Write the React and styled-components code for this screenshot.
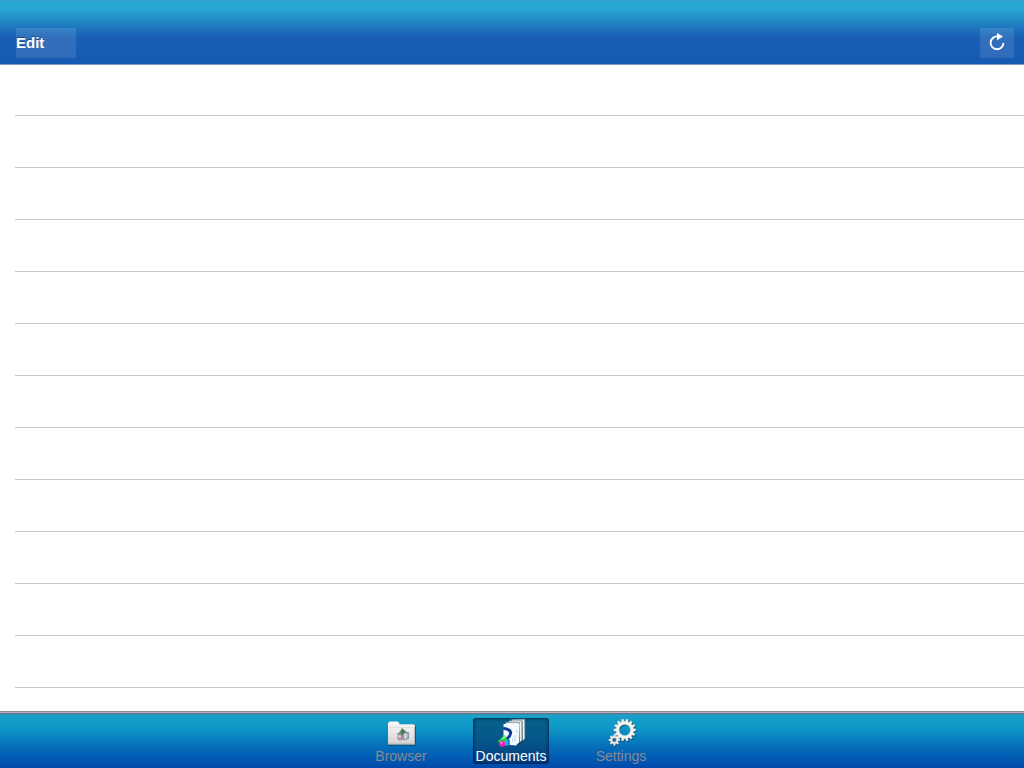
import React from "react";
import styled, { createGlobalStyle } from "styled-components";

const GlobalStyle = createGlobalStyle`
  * { box-sizing: border-box; }
  body {
    margin: 0;
    background: #fff;
    font-family: "Liberation Sans", Arial, sans-serif;
  }
`;

const Screen = styled.div`
  display: flex;
  flex-direction: column;
  height: 100vh;
`;

const NavBar = styled.header`
  flex: none;
  display: flex;
  justify-content: space-between;
  align-items: flex-end;
  height: 65px;
  padding: 0 10px 6px 16px;
  border-top: 1px solid #3c9cc6;
  border-bottom: 1px solid #7d9cc0;
  background: linear-gradient(#27aad2 0, #27a5cf 8px, #195fb6 36px, #155ab2 63px);
`;

const BarButton = styled.button`
  display: flex;
  align-items: center;
  justify-content: ${(p) => (p.$icon ? "center" : "flex-start")};
  width: ${(p) => (p.$icon ? 34 : 60)}px;
  height: 30px;
  padding: 0 0 2px;
  border: 0;
  background: rgba(255, 255, 255, 0.11);
  color: #fff;
  font: bold 15px "Liberation Sans", Arial, sans-serif;
  text-shadow: 0 -1px 0 rgba(0, 0, 0, 0.4);
`;

const FileList = styled.ul`
  flex: 1;
  min-height: 0;
  overflow: hidden;
  margin: 0;
  padding: 0 0 0 15px;
  list-style: none;
`;

const Row = styled.li`
  height: 52px;
  border-bottom: 1px solid #c8c7cc;
  &:first-child { height: 51px; }
`;

const TabBar = styled.nav`
  flex: none;
  display: flex;
  justify-content: center;
  gap: 34px;
  height: 57px;
  padding: 7px 2px 4px 0;
  background: linear-gradient(
    #8c8d93 0, #8c8d93 1px, #b4b2c2 1px, #b4b2c2 2px, #6f7488 2px, #6f7488 3px,
    #2483a8 3px, #2aa0c6 4px, #149fc9 6px, #109bc8 15px, #0468b8 39px, #0149ab 57px
  );
`;

const Tab = styled.button`
  display: flex;
  flex-direction: column;
  align-items: center;
  width: 76px;
  height: 46px;
  padding: 0;
  border: 0;
  border-radius: 3px;
  background: ${(p) => (p.$active ? "linear-gradient(#07628a, #06568a 50%, #033c82)" : "transparent")};
  box-shadow: ${(p) => (p.$active ? "inset 0 0 3px 1px rgba(0, 25, 60, 0.7)" : "none")};
  color: ${(p) => (p.$active ? "#fff" : "#858b92")};
  font: 14px/16px "Liberation Sans", Arial, sans-serif;

  svg { flex: none; margin-bottom: 1px; }
`;

function gearPath(cx, cy, outer, inner, teeth) {
  const step = (Math.PI * 2) / teeth;
  const points = [];
  for (let i = 0; i < teeth; i += 1) {
    const a = i * step;
    [[-0.32, inner], [-0.2, outer], [0.2, outer], [0.32, inner]].forEach(([offset, r]) => {
      const t = a + offset * step;
      points.push(`${(cx + r * Math.cos(t)).toFixed(2)} ${(cy + r * Math.sin(t)).toFixed(2)}`);
    });
  }
  return `M${points.join("L")}Z`;
}

function ring(cx, cy, r) {
  return `M${cx - r} ${cy}a${r} ${r} 0 1 0 ${2 * r} 0a${r} ${r} 0 1 0 ${-2 * r} 0Z`;
}

const RefreshIcon = () => (
  <svg width="18" height="20" viewBox="0 0 18 20" aria-hidden="true">
    <path d="M9.6 4.5A6.4 6.4 0 1 0 15.4 10.9" fill="none" stroke="#fff" strokeWidth="1.8" />
    <path d="M9 1L15 4.6L9 8.2Z" fill="#fff" />
  </svg>
);

const FolderIcon = () => (
  <svg width="32" height="29" viewBox="-1 0 32 29" aria-hidden="true">
    <defs>
      <linearGradient id="folder" x2="0" y2="1">
        <stop offset="0" stopColor="#fafafa" />
        <stop offset="1" stopColor="#d2d2d2" />
      </linearGradient>
    </defs>
    <path d="M2.5 7Q2.5 4 5 4H11.5L14 6.5H28Q29.8 6.5 29.8 9V27.8H2.5Z" fill="#04365d" opacity=".65" />
    <path d="M2 6.2Q2 3.5 4.5 3.5H11.3Q12.6 3.5 13.1 5L13.6 6.2H27.2Q29 6.2 29 8V26.5H2Z" fill="url(#folder)" />
    <path d="M3 9.3H28" stroke="#d5dadd" strokeWidth=".7" />
    <path d="M2.5 26H28.5V9" fill="none" stroke="#aaa" strokeWidth=".8" />
    <path d="M16 10L21 14.2L17 16.6L10.3 16.8L13.5 14Z" fill="#5f9465" />
    <path d="M16 11.5L21 15L18 20L15 16.5Z" fill="#4b6c58" />
    <path d="M17 15.3L22.4 14.4V20.6L17.6 21.8Z" fill="#b1bcc6" stroke="#76828e" strokeWidth=".9" />
    <path d="M19.2 15.6V20.6" stroke="#eef0f2" strokeWidth="1.2" />
    <circle cx="14.3" cy="19.4" r="3" fill="#ad8f9f" />
    <circle cx="13.6" cy="18.5" r="1.3" fill="#e0ced8" />
  </svg>
);

const DocumentsIcon = () => (
  <svg width="32" height="29" viewBox="0 0 32 29" aria-hidden="true">
    {[[9, 0.3], [6, 1.8], [3, 3.4]].map(([x, y]) => (
      <g key={x} transform={`translate(${x} ${y})`}>
        <path d="M9 2L21.5 1.6L22 21L19.8 23.6L7.5 22.6Z" fill="#073653" opacity=".65" />
        <path d="M7.8 1.2L20.8 .9L20.9 20.2L18.8 22.8L7 22Z" fill="#eff3f3" stroke="#718791" strokeWidth=".7" />
        <path d="M14.5 3.6L16 2.5L17.5 3.8L19.2 2.6" fill="none" stroke="#93a0a8" strokeWidth="1" />
      </g>
    ))}
    <path d="M8.5 6L24.4 5.6L24 24.3L21 27.4L8.5 26.3Z" fill="#f4fafb" />
    <path d="M17.5 20V24M20 17V24M22 12V15" stroke="#c3dceb" strokeWidth="1" />
    <path d="M8.2 10.2Q16.2 11.4 15.6 15.4Q15 19.2 10.5 21.6" fill="none" stroke="#0a3b9e" strokeWidth="3" />
    <path d="M9.6 17L12.6 22L8.6 24L2 24.2L5.8 20.5Z" fill="#14d936" />
    <path d="M9.6 17L10.6 20L6 22Z" fill="#7dfb85" />
    <path d="M9.6 22.2L14.6 21.4V27L9.6 27.8Z" fill="#26b9e6" />
    <path d="M12.6 21.8L14.6 21.4V27L12.6 27.3Z" fill="#1488b8" />
    <circle cx="7.2" cy="25.7" r="3" fill="#ec25b6" />
    <circle cx="6.5" cy="24.8" r="1.1" fill="#ffa6e4" />
  </svg>
);

const SettingsIcon = () => (
  <svg width="32" height="29" viewBox="-1 0 32 29" aria-hidden="true">
    <g fillRule="evenodd">
      <g fill="#073856" opacity=".7" transform="translate(.9 1)">
        <path d={gearPath(18.8, 12, 11, 8.8, 14) + ring(18.8, 12, 5.6)} />
        <path d={gearPath(8.4, 22, 5.6, 4, 8) + ring(8.4, 22, 2)} />
      </g>
      <path d={gearPath(18.8, 12, 11, 8.8, 14) + ring(18.8, 12, 5.6)} fill="#f3f3f0" stroke="#c2c2be" strokeWidth=".4" />
      <path d={gearPath(8.4, 22, 5.6, 4, 8) + ring(8.4, 22, 2)} fill="#eeeeea" stroke="#b5b5b0" strokeWidth=".4" />
    </g>
  </svg>
);

const TABS = [
  { label: "Browser", Icon: FolderIcon },
  { label: "Documents", Icon: DocumentsIcon, active: true },
  { label: "Settings", Icon: SettingsIcon },
];

export default function App() {
  return (
    <Screen>
      <GlobalStyle />
      <NavBar>
        <BarButton type="button">Edit</BarButton>
        <BarButton type="button" $icon aria-label="Refresh">
          <RefreshIcon />
        </BarButton>
      </NavBar>
      <FileList>
        {Array.from({ length: 12 }, (_, i) => (
          <Row key={i} />
        ))}
      </FileList>
      <TabBar>
        {TABS.map(({ label, Icon, active }) => (
          <Tab key={label} type="button" $active={active} aria-current={active ? "page" : undefined}>
            <Icon />
            {label}
          </Tab>
        ))}
      </TabBar>
    </Screen>
  );
}
